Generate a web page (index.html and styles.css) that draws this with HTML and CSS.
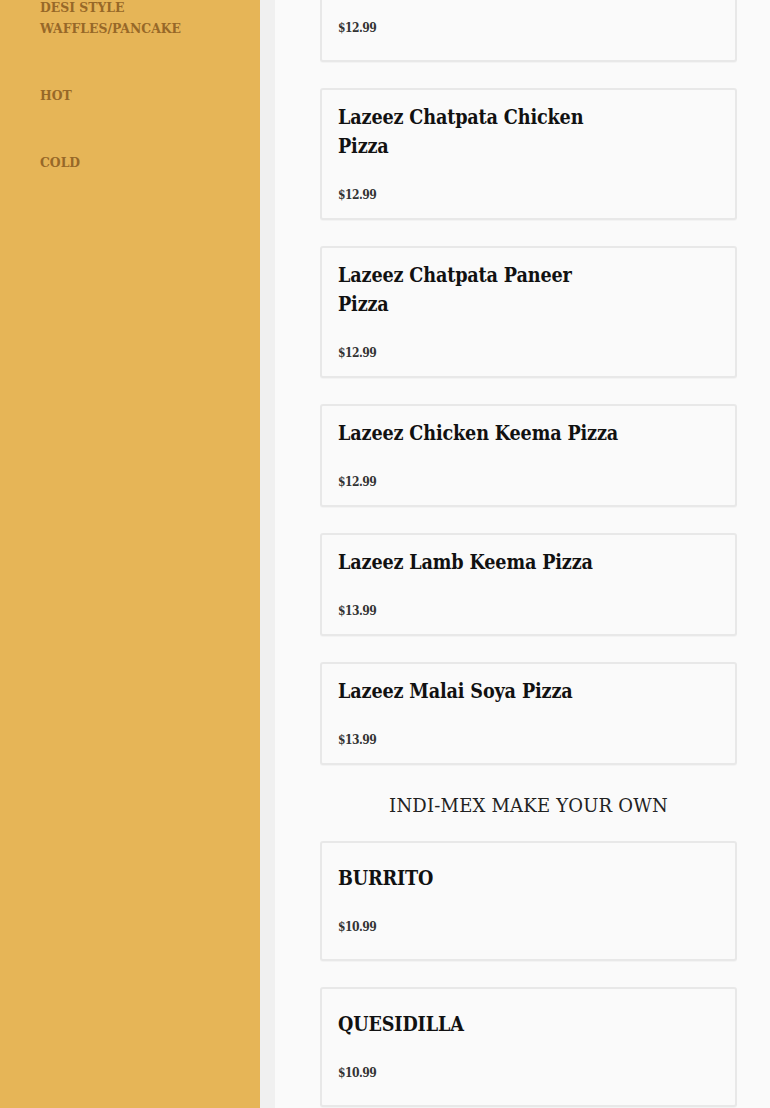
FILE: index.html
```html
<!DOCTYPE html>
<html lang="en">
<head>
<meta charset="utf-8">
<title>Menu</title>
<link rel="stylesheet" href="styles.css">
</head>
<body>
<div class="layout">
  <aside class="sidebar">
    <nav class="cat-list">
      <a class="cat">DESI STYLE WAFFLES/PANCAKE</a>
      <a class="cat">HOT</a>
      <a class="cat">COLD</a>
    </nav>
  </aside>
  <div class="strip"></div>
  <main class="main">
    <div class="items">
      <div class="card card-tall">
        <h3 class="title">Lazeez Tandoori Pizza</h3>
        <div class="price">$12.99</div>
      </div>
      <div class="card">
        <h3 class="title">Lazeez Chatpata Chicken Pizza</h3>
        <div class="price">$12.99</div>
      </div>
      <div class="card">
        <h3 class="title">Lazeez Chatpata Paneer Pizza</h3>
        <div class="price">$12.99</div>
      </div>
      <div class="card">
        <h3 class="title">Lazeez Chicken Keema Pizza</h3>
        <div class="price">$12.99</div>
      </div>
      <div class="card">
        <h3 class="title">Lazeez Lamb Keema Pizza</h3>
        <div class="price">$13.99</div>
      </div>
      <div class="card">
        <h3 class="title">Lazeez Malai Soya Pizza</h3>
        <div class="price">$13.99</div>
      </div>
      <h2 class="section-heading">INDI-MEX MAKE YOUR OWN</h2>
      <div class="card card-tall">
        <h3 class="title">BURRITO</h3>
        <div class="price">$10.99</div>
      </div>
      <div class="card card-tall">
        <h3 class="title">QUESIDILLA</h3>
        <div class="price">$10.99</div>
      </div>
    </div>
  </main>
</div>
</body>
</html>
```
FILE: styles.css
```css
html, body {
  margin: 0;
  padding: 0;
  height: 100%;
  overflow: hidden;
}
body {
  font-family: "DejaVu Serif", "Liberation Serif", serif;
  background: #fafafa;
}
.layout {
  display: flex;
  min-height: 1108px;
  height: 100%;
}
.sidebar {
  width: 260px;
  flex: none;
  background: #e6b557;
}
.cat-list {
  display: flex;
  flex-direction: column;
  gap: 46px;
  padding: 0 60px 0 40px;
  margin-top: -3px;
}
.cat {
  font-family: "DejaVu Serif", serif;
  font-weight: bold;
  font-size: 12.4px;
  line-height: 21px;
  color: #976828;
  text-decoration: none;
  display: block;
}
.strip {
  width: 15px;
  flex: none;
  background: #f0f0f0;
}
.main {
  flex: 1;
  background: #fafafa;
  padding: 0 33px 0 45px;
}
.items {
  display: flex;
  flex-direction: column;
  gap: 26px;
  margin-top: -58px;
}
.card {
  border: 2px solid #e8e8e8;
  border-radius: 3px;
  background: #fafafa;
  padding: 13px 16px 15px;
  box-shadow: 0 1px 1px rgba(0,0,0,0.03);
}
.card-tall {
  padding-top: 21px;
  padding-bottom: 24px;
}
.title {
  margin: 0 0 26px;
  max-width: 290px;
  font-family: "DejaVu Serif Condensed", "DejaVu Serif", serif;
  font-stretch: condensed;
  font-weight: bold;
  font-size: 19.6px;
  letter-spacing: -0.15px;
  line-height: 29px;
  color: #111;
}
.price {
  font-family: "DejaVu Serif Condensed", "DejaVu Serif", serif;
  font-stretch: condensed;
  font-weight: bold;
  font-size: 12px;
  letter-spacing: -0.5px;
  line-height: 16px;
  color: #333;
}
.section-heading {
  margin: 5px 0 0;
  text-align: center;
  font-family: "DejaVu Serif", serif;
  font-weight: normal;
  font-size: 18px;
  line-height: 19px;
  color: #222;
  letter-spacing: 0.2px;
}
```
